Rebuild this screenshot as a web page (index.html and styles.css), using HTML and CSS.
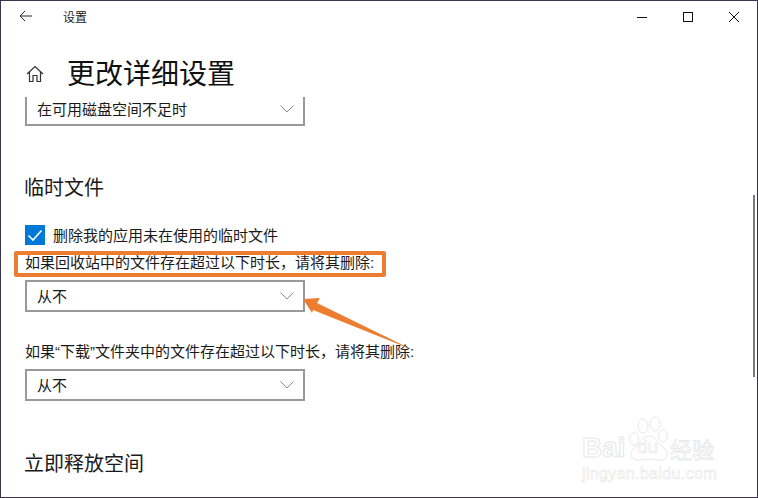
FILE: index.html
```html
<!DOCTYPE html>
<html lang="zh-CN">
<head>
  <meta charset="UTF-8">
  <title>设置</title>
  <link rel="stylesheet" href="styles.css">
</head>
<body>
  <div class="window">
    <!-- Title bar -->
    <div class="titlebar">
      <svg class="back" width="13" height="12" viewBox="0 0 13 12"><path d="M6 1 L1 6 L6 11 M1 6 H13" fill="none" stroke="#222" stroke-width="1"/></svg>
      <span class="app-name">设置</span>
      <div class="controls">
        <svg width="10" height="10" viewBox="0 0 10 10"><path d="M0 5.5 H10" stroke="#111" stroke-width="1"/></svg>
        <svg width="10" height="10" viewBox="0 0 10 10"><rect x="0.5" y="0.5" width="9" height="9" fill="none" stroke="#111" stroke-width="1"/></svg>
        <svg width="10" height="10" viewBox="0 0 10 10"><path d="M0 0 L10 10 M10 0 L0 10" stroke="#111" stroke-width="1"/></svg>
      </div>
    </div>

    <!-- Page heading -->
    <div class="page-head">
      <svg class="home" width="18" height="18" viewBox="0 0 18 18"><path d="M1 9 L9 1.5 L17 9 M3.5 7 V16.5 H7 V10.5 H11 V16.5 H14.5 V7" fill="none" stroke="#333" stroke-width="1.2"/></svg>
      <h1>更改详细设置</h1>
    </div>

    <!-- Settings list -->
    <div class="content">
      <div class="dropdown first"><span>在可用磁盘空间不足时</span><svg class="chevron" width="14" height="8" viewBox="0 0 14 8"><path d="M0.5 0.5 L7 7 L13.5 0.5" fill="none" stroke="#8a8a8a" stroke-width="1"/></svg></div>

      <h2>临时文件</h2>
      <div class="check-row">
        <span class="checkbox"><svg width="20" height="20" viewBox="0 0 20 20"><path d="M3.5 10.5 L8 15 L16.5 5.5" fill="none" stroke="#fff" stroke-width="1.6"/></svg></span>
        <span>删除我的应用未在使用的临时文件</span>
      </div>
      <p class="label label-recycle">如果回收站中的文件存在超过以下时长&#65292;请将其删除<span class="latin">:</span></p>
      <div class="dropdown"><span>从不</span><svg class="chevron" width="14" height="8" viewBox="0 0 14 8"><path d="M0.5 0.5 L7 7 L13.5 0.5" fill="none" stroke="#8a8a8a" stroke-width="1"/></svg></div>

      <p class="label label-download">如果<span class="latin">“</span>下载<span class="latin">”</span>文件夹中的文件存在超过以下时长&#65292;请将其删除<span class="latin">:</span></p>
      <div class="dropdown"><span>从不</span><svg class="chevron" width="14" height="8" viewBox="0 0 14 8"><path d="M0.5 0.5 L7 7 L13.5 0.5" fill="none" stroke="#8a8a8a" stroke-width="1"/></svg></div>

      <h2 class="free-space">立即释放空间</h2>
    </div>

    <div class="scrollbar"></div>

    <!-- Annotation on top of the screenshot -->
    <div class="note-box"></div>
    <svg class="note-arrow" width="120" height="70" viewBox="0 0 120 70"><path d="M3 10 L20 9 L17 14 L113 61 L13 21 L12 24 Z" fill="#ed7d31"/></svg>

    <!-- Watermark -->
    <div class="watermark">
      <div class="wm-top">
        <span class="wm-bai">Bai</span>
        <svg class="wm-paw" width="42" height="46" viewBox="0 0 42 46" fill="none" stroke="#e8e8e8" stroke-width="1">
          <ellipse cx="15" cy="10" rx="5" ry="7"/>
          <ellipse cx="27" cy="8" rx="5" ry="7"/>
          <ellipse cx="6" cy="23" rx="4.5" ry="6"/>
          <ellipse cx="35" cy="20" rx="4.5" ry="6"/>
          <path d="M21 20 C14 20 12 28 6 32 C0 37 3 45 12 44 C18 43 25 43 31 44 C40 45 42 37 36 32 C30 28 28 20 21 20 Z"/>
        </svg>
        <span class="wm-du">du</span>
        <span class="wm-cn">经验</span>
      </div>
      <div class="wm-url">jingyan.baidu.com</div>
    </div>
  </div>
</body>
</html>
```

FILE: styles.css
```css
* {
  box-sizing: border-box;
}
html, body {
  margin: 0;
  padding: 0;
}
body {
  font-family: "Noto Sans CJK SC", "Liberation Sans", sans-serif;
  color: #1a1a1a;
  background: #fff;
}
.window {
  position: relative;
  width: 758px;
  height: 498px;
  overflow: hidden;
  background: #fff;
  border: 1px solid #3c3350;
  display: flex;
  flex-direction: column;
}
.titlebar {
  height: 31px;
  flex: none;
  display: flex;
  align-items: center;
  padding-left: 18px;
}
.back {
  margin-top: -1px;
}
.app-name {
  margin-left: 31px;
  font-size: 12px;
  color: #222;
}
.controls {
  margin-left: auto;
  display: flex;
  align-items: center;
  gap: 36px;
  padding-right: 18px;
}
.page-head {
  height: 65px;
  flex: none;
  display: flex;
  align-items: center;
  padding: 14px 0 0 25px;
}
.home {
  margin-top: 4px;
}
h1 {
  margin: 0 0 0 23px;
  font-size: 28px;
  font-weight: 400;
  line-height: 40px;
  color: #111;
}
.content {
  flex: 1;
  overflow: hidden;
  padding-left: 24px;
}
.dropdown {
  width: 280px;
  height: 32px;
  border: 2px solid #999;
  display: flex;
  align-items: center;
  justify-content: space-between;
  padding: 0 9px 0 10px;
  font-size: 15px;
  line-height: 20px;
}
.dropdown.first {
  margin-top: -3px;
  padding-bottom: 2px;
}
h2 {
  margin: 47px 0 0 -1px;
  font-size: 20px;
  font-weight: 400;
  line-height: 28px;
}
.check-row {
  margin-top: 24px;
  display: flex;
  align-items: center;
  gap: 8px;
  font-size: 15px;
  line-height: 20px;
}
.checkbox {
  width: 20px;
  height: 20px;
  background: #0078d7;
  display: block;
}
.checkbox svg {
  display: block;
}
.label {
  margin: 0;
  font-size: 15px;
  line-height: 20px;
  white-space: nowrap;
}
.latin {
  font-family: "Liberation Sans", sans-serif;
}
.label-recycle {
  margin-top: 7px;
  margin-bottom: 7px;
}
.label-download {
  margin-top: 29px;
  margin-bottom: 7px;
}
.free-space {
  margin-top: 48px;
}
.scrollbar {
  position: absolute;
  left: 752px;
  top: 194px;
  width: 2px;
  height: 182px;
  background: #7a7a7a;
}
.note-box {
  position: absolute;
  left: 13px;
  top: 250px;
  width: 372px;
  height: 26px;
  border: 4px solid #ed7d31;
  border-radius: 2px;
}
.note-arrow {
  position: absolute;
  left: 299px;
  top: 288px;
}
.watermark {
  position: absolute;
  left: 581px;
  top: 415px;
  width: 136px;
  color: transparent;
  -webkit-text-stroke: 1px #e8e8e8;
}
.wm-top {
  position: relative;
  display: flex;
  align-items: flex-end;
  height: 46px;
}
.wm-bai {
  width: 46px;
  font-family: "Liberation Sans", sans-serif;
  font-size: 28px;
  line-height: 36px;
  font-weight: 700;
  margin-bottom: -4px;
}
.wm-paw {
  flex: none;
}
.wm-du {
  position: absolute;
  left: 55px;
  top: 22px;
  font-family: "Liberation Sans", sans-serif;
  font-size: 19px;
  line-height: 18px;
  -webkit-text-stroke: 0.7px #e8e8e8;
}
.wm-cn {
  font-size: 22px;
  line-height: 30px;
  margin-bottom: -1px;
  white-space: nowrap;
  -webkit-text-stroke: 0.8px #e8e8e8;
}
.wm-url {
  font-family: "Liberation Sans", sans-serif;
  font-size: 16px;
  line-height: 18px;
  margin-top: 3px;
  letter-spacing: 0.35px;
  white-space: nowrap;
  -webkit-text-stroke: 0.6px #e8e8e8;
}
```
